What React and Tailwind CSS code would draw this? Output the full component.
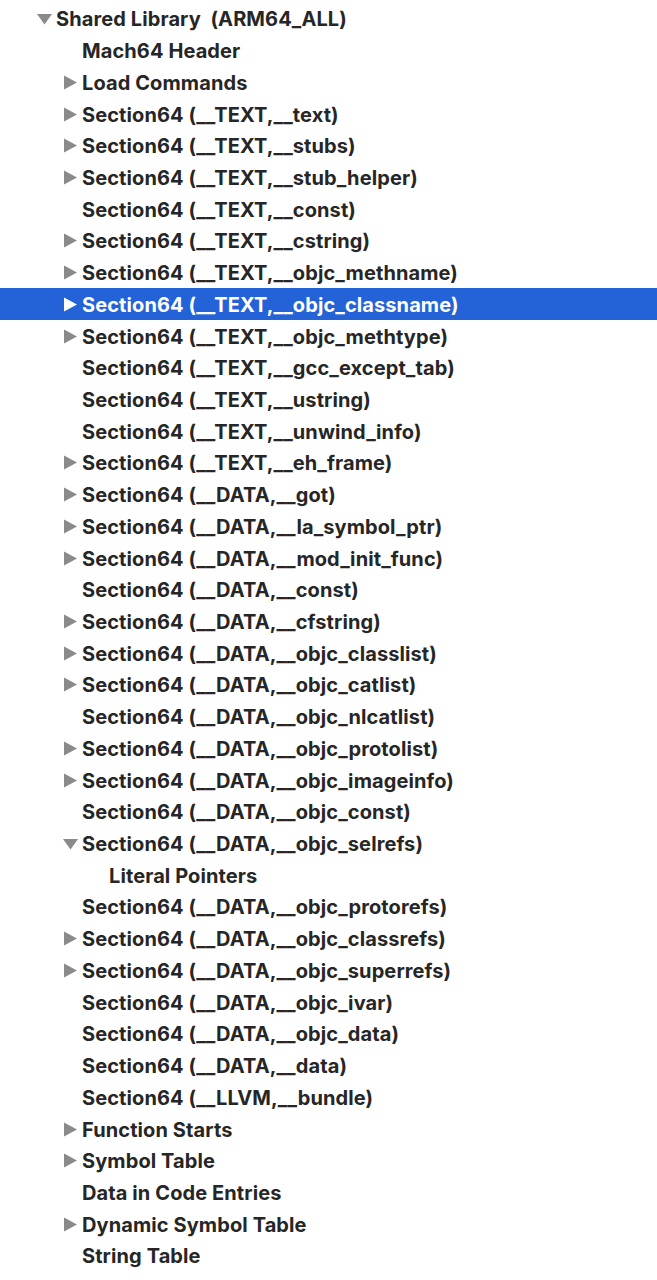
const rows = [
  { label: "Shared Library  (ARM64_ALL)", level: 1, arrow: "down" },
  { label: "Mach64 Header", level: 2 },
  { label: "Load Commands", level: 2, arrow: "right" },
  { label: "Section64 (__TEXT,__text)", level: 2, arrow: "right" },
  { label: "Section64 (__TEXT,__stubs)", level: 2, arrow: "right" },
  { label: "Section64 (__TEXT,__stub_helper)", level: 2, arrow: "right" },
  { label: "Section64 (__TEXT,__const)", level: 2 },
  { label: "Section64 (__TEXT,__cstring)", level: 2, arrow: "right" },
  { label: "Section64 (__TEXT,__objc_methname)", level: 2, arrow: "right" },
  { label: "Section64 (__TEXT,__objc_classname)", level: 2, arrow: "right", selected: true },
  { label: "Section64 (__TEXT,__objc_methtype)", level: 2, arrow: "right" },
  { label: "Section64 (__TEXT,__gcc_except_tab)", level: 2 },
  { label: "Section64 (__TEXT,__ustring)", level: 2 },
  { label: "Section64 (__TEXT,__unwind_info)", level: 2 },
  { label: "Section64 (__TEXT,__eh_frame)", level: 2, arrow: "right" },
  { label: "Section64 (__DATA,__got)", level: 2, arrow: "right" },
  { label: "Section64 (__DATA,__la_symbol_ptr)", level: 2, arrow: "right" },
  { label: "Section64 (__DATA,__mod_init_func)", level: 2, arrow: "right" },
  { label: "Section64 (__DATA,__const)", level: 2 },
  { label: "Section64 (__DATA,__cfstring)", level: 2, arrow: "right" },
  { label: "Section64 (__DATA,__objc_classlist)", level: 2, arrow: "right" },
  { label: "Section64 (__DATA,__objc_catlist)", level: 2, arrow: "right" },
  { label: "Section64 (__DATA,__objc_nlcatlist)", level: 2 },
  { label: "Section64 (__DATA,__objc_protolist)", level: 2, arrow: "right" },
  { label: "Section64 (__DATA,__objc_imageinfo)", level: 2, arrow: "right" },
  { label: "Section64 (__DATA,__objc_const)", level: 2 },
  { label: "Section64 (__DATA,__objc_selrefs)", level: 2, arrow: "down" },
  { label: "Literal Pointers", level: 3 },
  { label: "Section64 (__DATA,__objc_protorefs)", level: 2 },
  { label: "Section64 (__DATA,__objc_classrefs)", level: 2, arrow: "right" },
  { label: "Section64 (__DATA,__objc_superrefs)", level: 2, arrow: "right" },
  { label: "Section64 (__DATA,__objc_ivar)", level: 2 },
  { label: "Section64 (__DATA,__objc_data)", level: 2 },
  { label: "Section64 (__DATA,__data)", level: 2 },
  { label: "Section64 (__LLVM,__bundle)", level: 2 },
  { label: "Function Starts", level: 2, arrow: "right" },
  { label: "Symbol Table", level: 2, arrow: "right" },
  { label: "Data in Code Entries", level: 2 },
  { label: "Dynamic Symbol Table", level: 2, arrow: "right" },
  { label: "String Table", level: 2 },
];

const indent = {
  1: "pl-[37px]",
  2: "pl-[63px]",
  3: "pl-[90px]",
};

const Arrow = ({ dir, selected }) => {
  const fill = selected ? "#ffffff" : "#8a8a8a";
  if (dir === "down") {
    return (
      <svg width="15" height="12" viewBox="0 0 15 12">
        <polygon points="0,1 15,1 7.5,11.5" fill={fill} />
      </svg>
    );
  }
  return (
    <svg width="14" height="15" viewBox="0 0 14 15">
      <polygon points="1,0.5 14,7.5 1,14.5" fill={fill} />
    </svg>
  );
};

const App = () => {
  return (
    <div
      className="w-[657px] h-[1280px] bg-white pt-[3px] overflow-hidden"
      style={{ fontFamily: "Inter, 'Liberation Sans', sans-serif" }}
    >
      {rows.map((row, i) => (
        <div
          key={i}
          className={`flex items-center h-[31.72px] ${indent[row.level]} ${
            row.selected ? "bg-[#2462d8] text-white" : "text-[#262626]"
          }`}
        >
          <div className="w-[19px] flex items-center">
            {row.arrow && <Arrow dir={row.arrow} selected={row.selected} />}
          </div>
          <span className="whitespace-pre text-[20px] font-bold leading-none pt-[1px] tracking-[0.1px]">
            {row.label}
          </span>
        </div>
      ))}
    </div>
  );
};

export default App;
